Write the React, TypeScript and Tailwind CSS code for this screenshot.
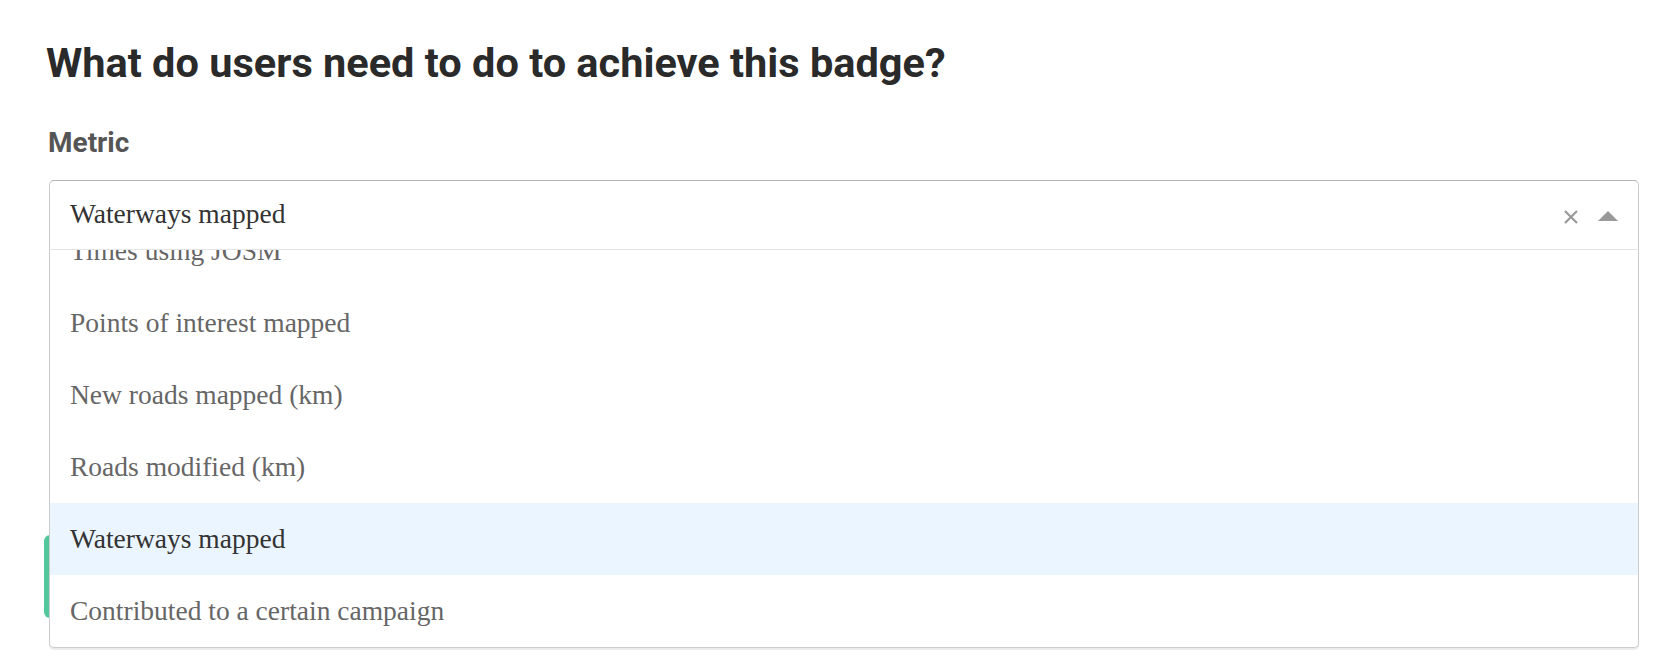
import React from "react";

const options = [
  "Times using JOSM",
  "Points of interest mapped",
  "New roads mapped (km)",
  "Roads modified (km)",
  "Waterways mapped",
  "Contributed to a certain campaign",
];

export default function App() {
  return (
    <div className="w-[1666px] h-[666px] bg-white overflow-hidden">
      <div className="pt-[42px] pl-[46px] pr-[27px]">
        <h1
          className="text-[41.5px] leading-none font-bold text-[#2a2a2a]"
          style={{ fontFamily: "Roboto, 'Liberation Sans', sans-serif" }}
        >
          What do users need to do to achieve this badge?
        </h1>
        <label
          className="block ml-[2px] mt-[45px] text-[28px] leading-none font-bold text-[#555]"
          style={{ fontFamily: "Roboto, 'Liberation Sans', sans-serif" }}
        >
          Metric
        </label>
        <div className="relative ml-[3px] mt-[23px]">
          <div className="flex items-center h-[70px] box-border border border-t-[#b3b3b3] border-x-[#cccccc] border-b-[#d9d9d9] rounded-t-[5px] bg-white pl-[20px] pr-[20px]">
            <span
              className="flex-1 text-[27.5px] leading-[28px] text-[#333] mb-[2px]"
              style={{ fontFamily: "'Liberation Serif', serif" }}
            >
              Waterways mapped
            </span>
            <svg width="14" height="14" viewBox="0 0 14 14" className="mt-[4px]">
              <line x1="1" y1="1" x2="13" y2="13" stroke="#999" strokeWidth="2.2" />
              <line x1="13" y1="1" x2="1" y2="13" stroke="#999" strokeWidth="2.2" />
            </svg>
            <span className="ml-[20px] mt-[2px] w-0 h-0 border-l-[10px] border-r-[10px] border-b-[10px] border-l-transparent border-r-transparent border-b-[#999]" />
          </div>
          <div className="absolute left-0 right-0 top-[69px] z-10 bg-white border border-[#cccccc] border-t-[#e6e6e6] rounded-b-[5px] shadow-[0_2px_0_rgba(0,0,0,0.08)]">
            <div className="h-[397px] overflow-hidden">
              <div className="-mt-[35px]">
                {options.map((o) => {
                  const sel = o === "Waterways mapped";
                  return (
                    <div
                      key={o}
                      className={
                        "h-[72px] pl-[20px] text-[27.5px] leading-[72px] " +
                        (sel ? "bg-[#ebf5ff] text-[#333]" : "text-[#666]")
                      }
                      style={{ fontFamily: "'Liberation Serif', serif" }}
                    >
                      {o}
                    </div>
                  );
                })}
              </div>
            </div>
          </div>
          <div className="mt-[285px] -ml-[5px] w-[220px] h-[83px] rounded-[6px] bg-[#50c89c]" />
        </div>
      </div>
    </div>
  );
}
